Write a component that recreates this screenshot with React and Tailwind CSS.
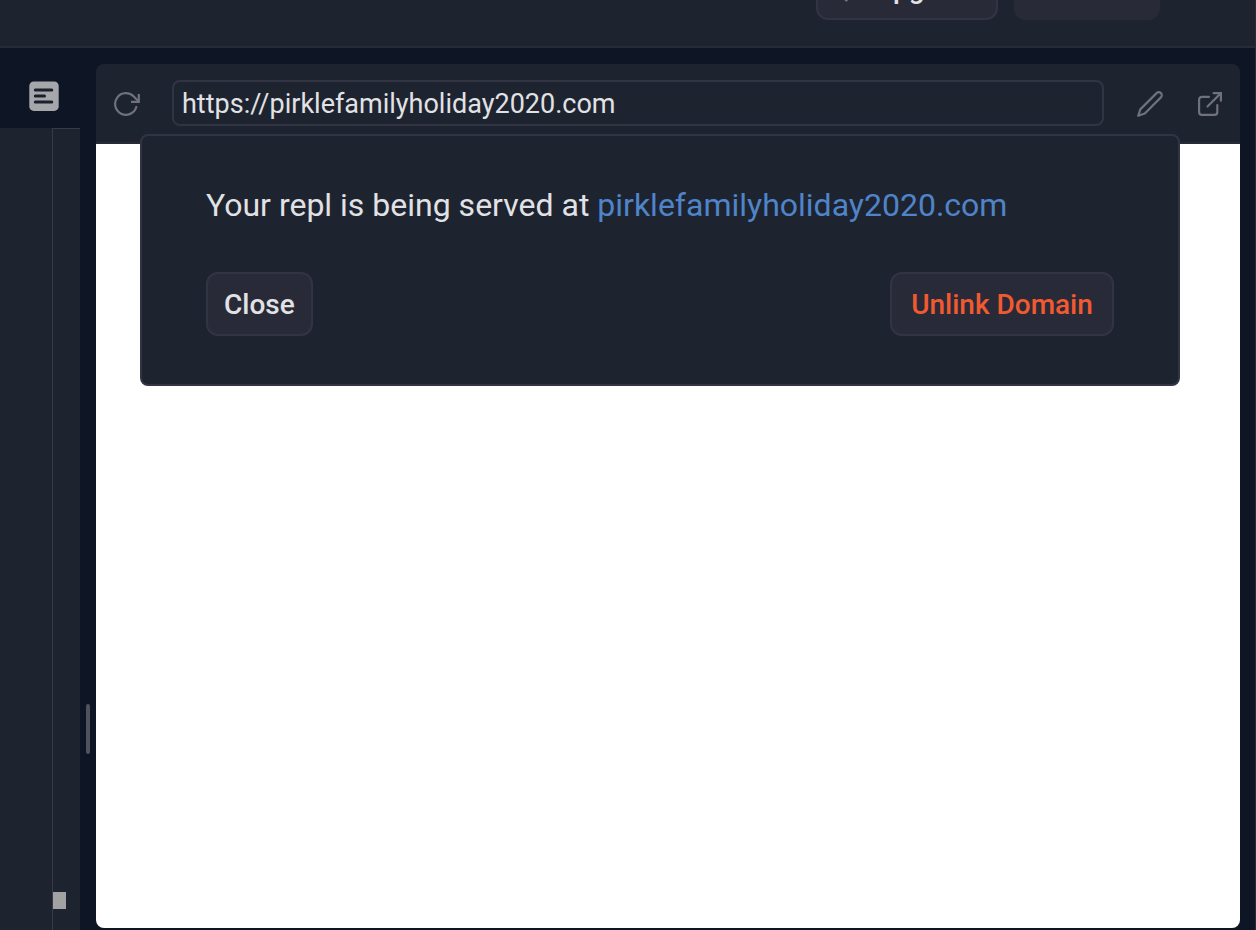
import { Zap } from "lucide-react";

function FileIcon() {
  return (
    <svg width="30" height="30" viewBox="0 0 30 30" aria-hidden="true">
      <rect x="0.3" y="0.5" width="29.4" height="29.4" rx="4.5" fill="#a6a7ab" />
      <path d="M6.3 9h16.5M6.3 15h9.2M6.3 21h16.5" stroke="#1a202e" strokeWidth="3" strokeLinecap="round" />
    </svg>
  );
}

function RefreshIcon() {
  return (
    <svg width="26" height="24" viewBox="0 0 26 24" fill="none" stroke="currentColor" strokeWidth="2.2" strokeLinecap="round" aria-hidden="true">
      <path d="M22.3 15A10.8 10.8 0 1 1 19.8 4.6L24.2 9" />
      <path d="M24.8 2V9.8H17" strokeLinecap="butt" />
    </svg>
  );
}

function PencilIcon() {
  return (
    <svg width="26" height="26" viewBox="0 0 26 26" fill="none" stroke="currentColor" strokeWidth="2.2" strokeLinejoin="round" aria-hidden="true">
      <path d="M19.6 2.1a3 3 0 0 1 4.3 4.3L7.8 22.5 1.2 24.8 3.3 18.4Z" />
    </svg>
  );
}

function ExternalIcon() {
  return (
    <svg width="24" height="24" viewBox="0 0 24 24" fill="none" stroke="currentColor" strokeWidth="2.2" strokeLinecap="round" aria-hidden="true">
      <path d="M19.3 13.2V20.1a2.8 2.8 0 0 1-2.8 2.8H3.9A2.8 2.8 0 0 1 1.1 20.1V7.6a2.8 2.8 0 0 1 2.8-2.8H11" />
      <path d="M15.5 1.1H22.9V8.7M22.9 1.1 9.5 14.5" />
    </svg>
  );
}

const button = "flex h-16 items-center rounded-xl border-2 border-[#323443] bg-[#282a38] px-4 pt-0.5 text-[28px] leading-8 font-medium";

export default function App() {
  return (
    <div className="flex h-screen flex-col overflow-hidden border-r border-[#282b38] bg-[#0e1525] font-['Roboto',sans-serif] text-[#e1e2e4]">
      <header className="flex h-12 shrink-0 items-end justify-end gap-4 overflow-hidden border-b-2 border-[#282a38] bg-[#1e2330] pr-[95px] pb-[26px]">
        <button className={`${button} w-[182px] justify-between`}>
          <Zap size={28} strokeWidth={1.5} className="text-[#6f717c]" />
          Upgrade
        </button>
        <button aria-label="Account" className="h-16 w-[146px] rounded-xl bg-[#282a38]" />
      </header>

      <div className="flex min-h-0 flex-1">
        <aside className="flex w-20 shrink-0 flex-col">
          <div className="flex h-20 shrink-0 items-center justify-end pt-4 pr-[21px]">
            <button aria-label="Files"><FileIcon /></button>
          </div>
          <div className="flex flex-1 justify-end bg-[#1e2330]">
            <div className="flex w-7 flex-col justify-end border-t border-l border-[#383a47] pb-[21px]">
              <div className="h-[17px] w-[13px] bg-[#a2a2a2]" />
            </div>
          </div>
        </aside>

        <div className="flex w-4 shrink-0 flex-col items-center justify-end pb-44">
          <div className="h-[50px] w-1 rounded-sm bg-[#50515e]" />
        </div>

        <main className="relative mt-4 mr-[15px] mb-0.5 flex min-w-0 flex-1 flex-col">
          <div className="flex h-20 shrink-0 items-center rounded-t-lg border-b-2 border-[#282a38] bg-[#1e2330] px-[18px] text-[#6f717c]">
            <button aria-label="Reload" className="pt-0.5"><RefreshIcon /></button>
            <input
              aria-label="Address"
              defaultValue="https://pirklefamilyholiday2020.com"
              className="mr-[33px] ml-8 h-[46px] min-w-0 flex-1 rounded-lg border-2 border-[#323443] bg-transparent px-2 pt-0.5 text-[27px] text-[#e1e2e4] outline-none"
            />
            <button aria-label="Edit" className="mr-[35px] pt-0.5"><PencilIcon /></button>
            <button aria-label="Open in new tab" className="pt-0.5"><ExternalIcon /></button>
          </div>
          <div className="flex-1 rounded-b-lg bg-white" />

          <section className="absolute top-[70px] right-[60px] left-11 rounded-lg border-2 border-[#323443] bg-[#1e2330] px-16 py-12">
            <p className="text-[32px] leading-[42px]">
              Your repl is being served at{" "}
              <a href="https://pirklefamilyholiday2020.com" className="text-[#5084c8]">pirklefamilyholiday2020.com</a>
            </p>
            <div className="mt-[46px] flex justify-between">
              <button className={button}>Close</button>
              <button className={`${button} min-w-56 justify-center text-[#f15a31]`}>Unlink Domain</button>
            </div>
          </section>
        </main>
      </div>
    </div>
  );
}
